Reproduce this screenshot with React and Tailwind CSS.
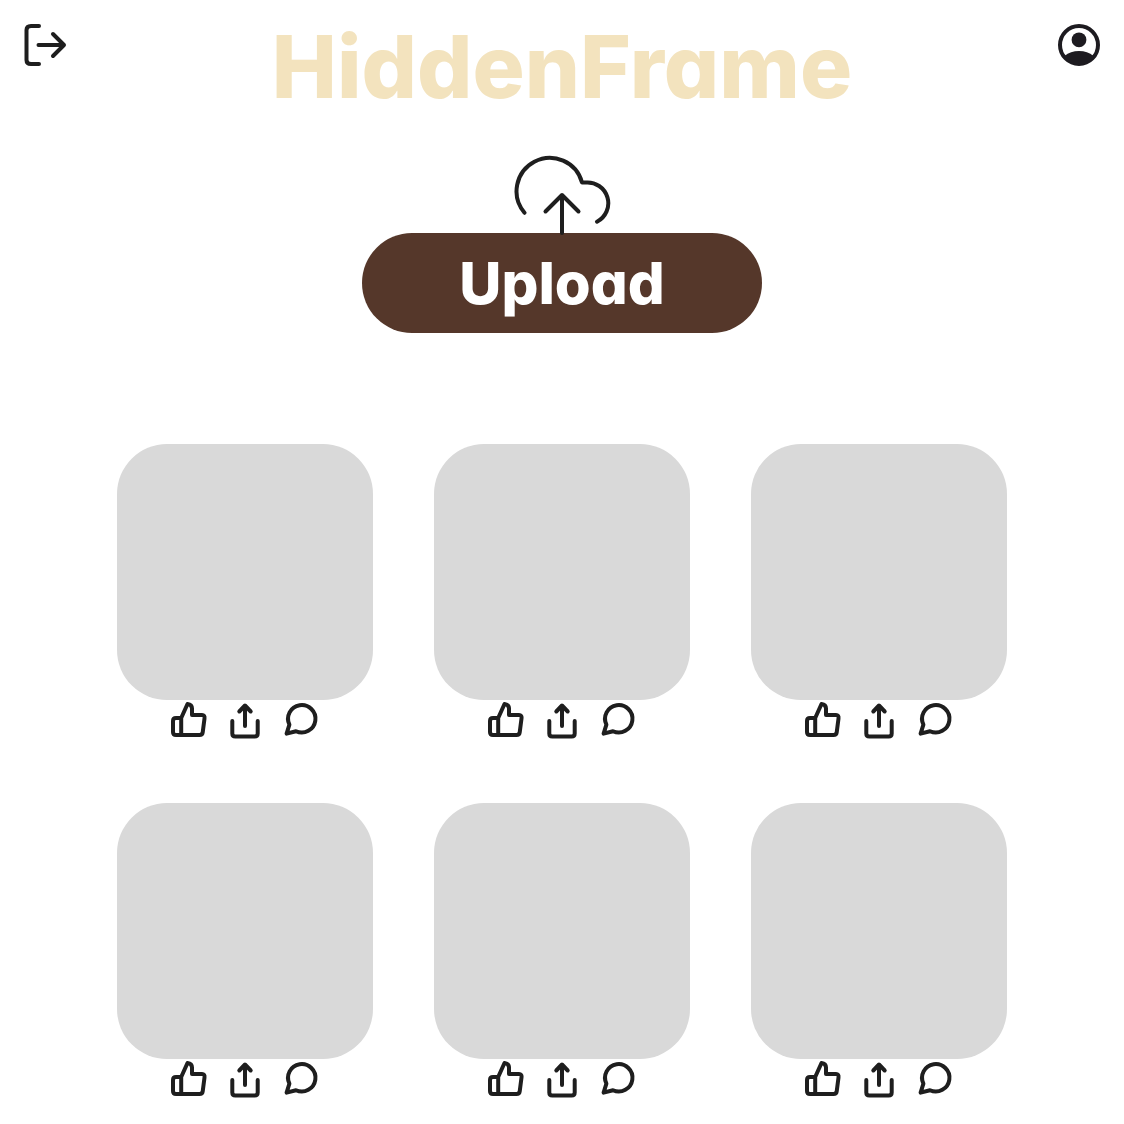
const stroke = {
  fill: 'none',
  stroke: 'currentColor',
  strokeWidth: 4,
  strokeLinecap: 'round',
  strokeLinejoin: 'round',
  'aria-hidden': true,
};

function LogoutIcon() {
  return (
    <svg viewBox="0 0 50 50" className="size-[50px]" {...stroke}>
      <path d="M19 6H11Q6.500 6 6.500 10V40Q6.500 44 11 44H19" />
      <path d="M18.500 25H44M33 14L44 25L33 36" />
    </svg>
  );
}

function AccountIcon() {
  return (
    <svg viewBox="0 0 50 50" className="size-[50px]" aria-hidden="true">
      <circle cx="25" cy="25" r="19" fill="none" stroke="currentColor" strokeWidth="4" />
      <circle cx="25" cy="19.800" r="7.400" fill="currentColor" />
      <path d="M10.500 36Q16.500 31 25 31Q33.500 31 39.500 36L37.500 40.500A20 20 0 0 1 12.500 40.500Z" fill="currentColor" />
    </svg>
  );
}

function CloudIcon() {
  return (
    <svg viewBox="0 0 100 86" className="h-[86px] w-[100px]" {...stroke}>
      <path d="M12.500 62.800A33.300 33.300 0 1 1 70 32.500H73.500A20.800 20.800 0 0 1 85 71.700" />
      <path d="M50 83V45M33.500 61.500L50 45L66.500 61.500" />
    </svg>
  );
}

function LikeIcon() {
  return (
    <svg viewBox="0 0 40 40" className="size-10" {...stroke}>
      <path d="M12.200 18H7Q4 18 4 21V32Q4 35 7 35H30.500Q33.300 35 33.700 32.400L35.500 18.500Q36 15 33 15H23V8.500Q23 4.500 18.500 4L12.200 18V35" />
    </svg>
  );
}

function ShareIcon() {
  return (
    <svg viewBox="0 0 40 40" className="size-10" {...stroke}>
      <path d="M7.300 21V33.500Q7.300 36.500 10.300 36.500H29.700Q32.700 36.500 32.700 33.500V21" />
      <path d="M20 26V6M14.300 11.500L20 5.500L25.700 11.500" />
    </svg>
  );
}

function CommentIcon() {
  return (
    <svg viewBox="0 0 40 40" className="size-10" {...stroke}>
      <path d="M8.400 24.700A13.700 13.700 0 1 1 15 31.200L5.600 33.600Z" />
    </svg>
  );
}

function Post({ number }) {
  return (
    <li>
      <div className="aspect-square rounded-[50px] bg-[#d9d9d9]" />
      <div className="flex justify-center gap-4">
        <button type="button" aria-label={`Like post ${number}`}><LikeIcon /></button>
        <button type="button" aria-label={`Share post ${number}`}><ShareIcon /></button>
        <button type="button" aria-label={`Comment on post ${number}`}><CommentIcon /></button>
      </div>
    </li>
  );
}

export default function App() {
  return (
    <div className="min-h-screen bg-white pb-6 font-['Inter',sans-serif] text-[#1e1e1e]">
      <header className="flex items-start justify-between px-5 pt-5">
        <button type="button" aria-label="Log out"><LogoutIcon /></button>
        <h1 className="text-[87px] leading-[94px] font-extrabold text-[#f3e3be] [font-feature-settings:'cv11']">
          HiddenFrame
        </h1>
        <button type="button" aria-label="Account" className="text-[#1d1b20]"><AccountIcon /></button>
      </header>
      <main className="flex flex-col items-center px-6 pt-9">
        <div className="relative z-10 -mb-[3px]"><CloudIcon /></div>
        <button
          type="button"
          className="h-[100px] w-full max-w-[400px] rounded-full bg-[#55372a] text-[58px] leading-[72px] font-extrabold text-white [font-feature-settings:'cv11']"
        >
          Upload
        </button>
        <ul className="mt-[111px] grid w-full max-w-[890px] grid-cols-3 gap-x-[61px] gap-y-[63px]">
          {[1, 2, 3, 4, 5, 6].map((n) => <Post key={n} number={n} />)}
        </ul>
      </main>
    </div>
  );
}
